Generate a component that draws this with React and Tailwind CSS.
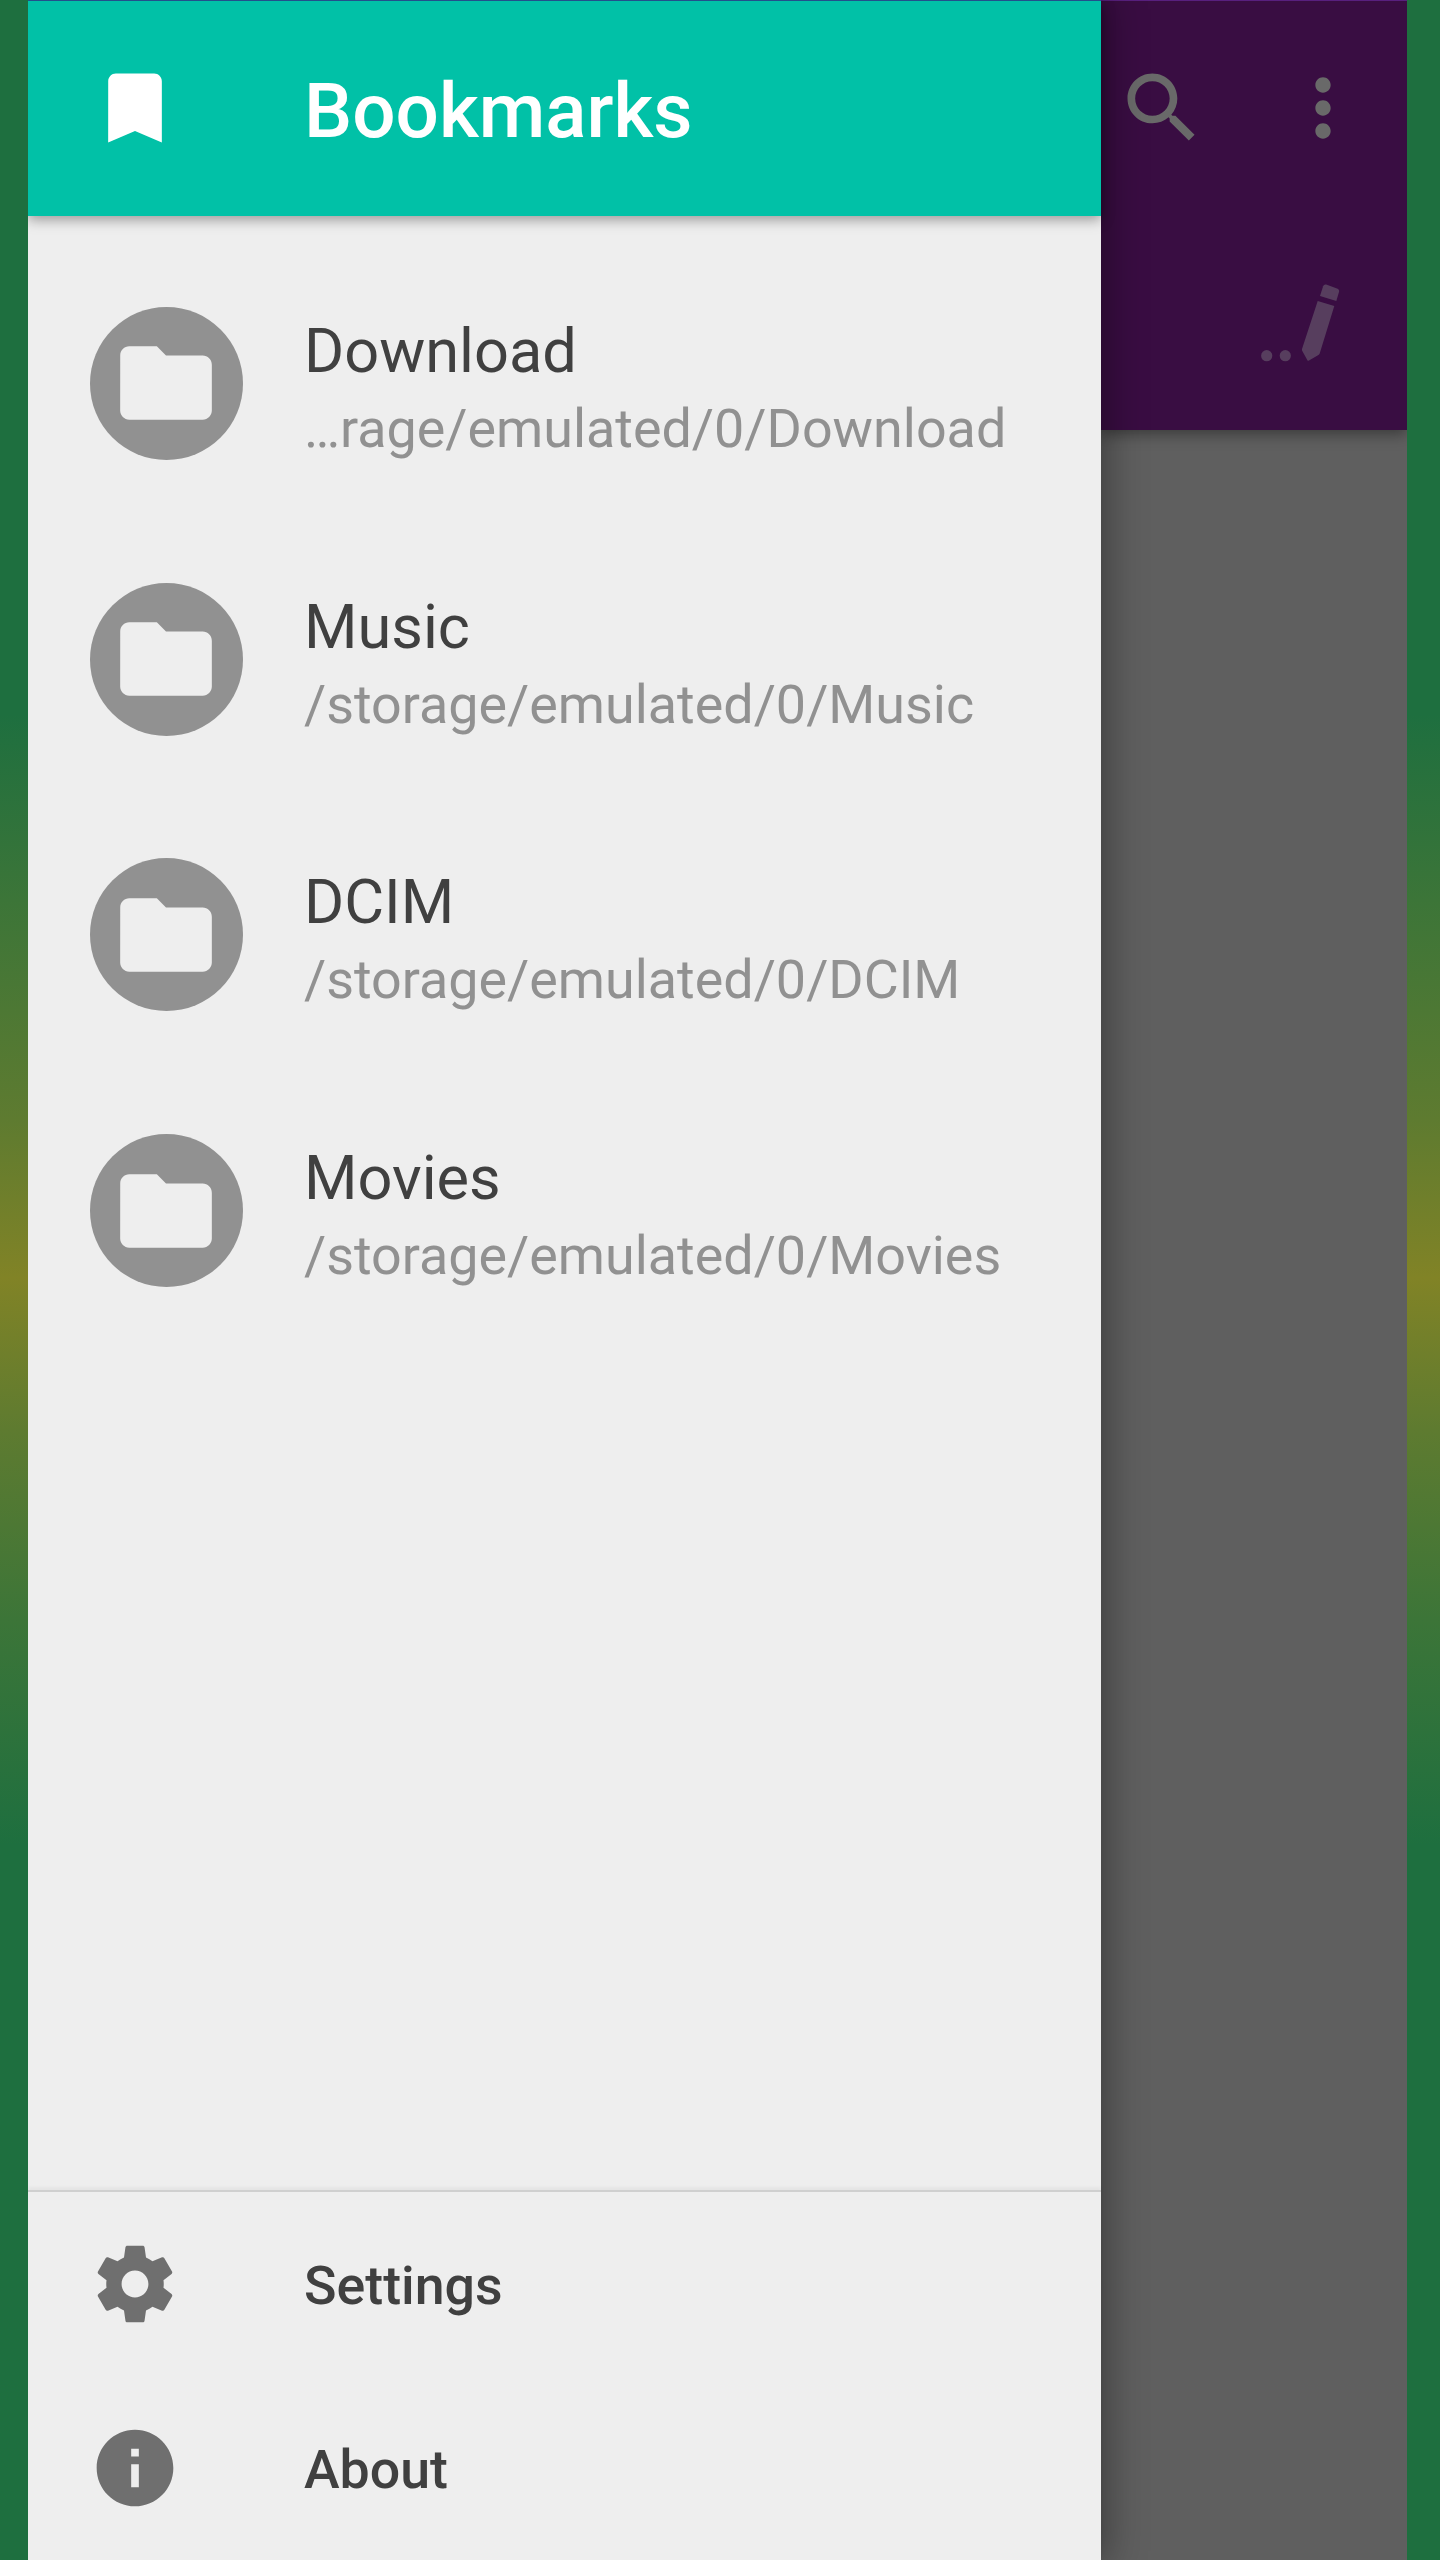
import React from 'react';

const bookmarks = [
    { name: 'Download', path: '…rage/emulated/0/Download' },
    { name: 'Music', path: '/storage/emulated/0/Music' },
    { name: 'DCIM', path: '/storage/emulated/0/DCIM' },
    { name: 'Movies', path: '/storage/emulated/0/Movies' },
];

const icons = {
    bookmark: 'M17 3H7c-1.1 0-1.99.9-1.99 2L5 21l7-3 7 3V5c0-1.1-.9-2-2-2z',
    folder: 'M10 4H4c-1.1 0-1.99.9-1.99 2L2 18c0 1.1.9 2 2 2h16c1.1 0 2-.9 2-2V8c0-1.1-.9-2-2-2h-8l-2-2z',
    settings: 'M19.43 12.98c.04-.32.07-.64.07-.98s-.03-.66-.07-.98l2.11-1.65c.19-.15.24-.42.12-.64l-2-3.46c-.12-.22-.39-.3-.61-.22l-2.49 1c-.52-.4-1.08-.73-1.69-.98l-.38-2.65C14.46 2.18 14.25 2 14 2h-4c-.25 0-.46.18-.49.42l-.38 2.65c-.61.25-1.17.59-1.69.98l-2.49-1c-.23-.09-.49 0-.61.22l-2 3.46c-.13.22-.07.49.12.64l2.11 1.65c-.04.32-.07.65-.07.98s.03.66.07.98l-2.11 1.65c-.19.15-.24.42-.12.64l2 3.46c.12.22.39.3.61.22l2.49-1c.52.4 1.08.73 1.69.98l.38 2.65c.03.24.24.42.49.42h4c.25 0 .46-.18.49-.42l.38-2.65c.61-.25 1.17-.59 1.69-.98l2.49 1c.23.09.49 0 .61-.22l2-3.46c.12-.22.07-.49-.12-.64l-2.11-1.65zM12 15.5c-1.93 0-3.5-1.57-3.5-3.5s1.57-3.5 3.5-3.5 3.5 1.57 3.5 3.5-1.57 3.5-3.5 3.5z',
    info: 'M12 2C6.48 2 2 6.48 2 12s4.48 10 10 10 10-4.48 10-10S17.52 2 12 2zm1 15h-2v-6h2v6zm0-8h-2V7h2v2z',
    search: 'M15.5 14h-.79l-.28-.27C15.41 12.59 16 11.11 16 9.5 16 5.91 13.09 3 9.5 3S3 5.91 3 9.5 5.91 16 9.5 16c1.61 0 3.09-.59 4.23-1.57l.27.28v.79l5 4.99L20.49 19l-4.99-5zm-6 0C7.01 14 5 11.99 5 9.5S7.01 5 9.5 5 14 7.01 14 9.5 11.99 14 9.5 14z',
    more: 'M12 8c1.1 0 2-.9 2-2s-.9-2-2-2-2 .9-2 2 .9 2 2 2zm0 2c-1.1 0-2 .9-2 2s.9 2 2 2 2-.9 2-2-.9-2-2-2zm0 6c-1.1 0-2 .9-2 2s.9 2 2 2 2-.9 2-2-.9-2-2-2z',
};

const Icon = ({ name, className = 'w-[92px] h-[92px]' }) => (
    <svg viewBox="0 0 24 24" fill="currentColor" className={`shrink-0 ${className}`}>
        <path d={icons[name]} />
    </svg>
);

// Two dots followed by a slanted pencil
const RenameIcon = () => (
    <svg viewBox="0 0 80 78" fill="currentColor" className="w-[80px] h-[78px]">
        <circle cx="6.7" cy="71.7" r="5.6" />
        <circle cx="25.3" cy="71.7" r="5.6" />
        <path d="M57.7 17 74.3 22 59.7 69.4Q59.3 70.6 58 71.3L49 76.6Q48 77.3 47.4 76.2L42.3 67Q41.7 66 42 65z" />
        <path d="M60 12 63.1 2.2Q64 0 66.2.6L77 4.5Q79.7 5.5 79 8L76.3 17z" />
    </svg>
);

const BookmarkRow = ({ name, path }) => (
    <li className="flex items-center h-[275.8px] pl-[61.5px]">
        <div className="flex items-center justify-center w-[153px] h-[153px] rounded-full bg-[#919191] text-[#eeeeee]">
            <Icon name="folder" className="w-[110px] h-[110px]" />
        </div>
        <div className="ml-[61.5px] mt-[12px] whitespace-nowrap">
            <div className="text-[61.3px] leading-[78px] text-[#404040]">{name}</div>
            <div className="text-[53.85px] leading-[77px] text-[#919191]">{path}</div>
        </div>
    </li>
);

const FooterRow = ({ icon, label }) => (
    <div className="flex items-center h-[184px] pl-[61px]">
        <Icon name={icon} className="w-[92px] h-[92px] text-[#6f6f6f]" />
        <span className="ml-[123px] pt-[3px] text-[53.7px] leading-[64px] font-medium text-[#404040]">{label}</span>
    </div>
);

const Drawer = () => (
    <aside className="relative z-10 flex flex-col w-[1072.5px] h-full bg-[#eeeeee] shadow-[2px_0_36px_4px_rgba(0,0,0,0.36)] [clip-path:inset(0_-60px_0_0)]">
        <header className="relative flex items-center h-[215.5px] pl-[61px] bg-[#01c1a7] border-t border-[#234f8c] text-white shadow-[0_4px_12px_rgba(0,0,0,0.35)]">
            <Icon name="bookmark" />
            <h1 className="ml-[123px] pt-[5px] text-[76.4px] leading-[90px] font-medium">Bookmarks</h1>
        </header>
        <ul className="flex-1 pt-[30px]">
            {bookmarks.map((item) => (
                <BookmarkRow key={item.name} name={item.name} path={item.path} />
            ))}
        </ul>
        <footer className="h-[370px] border-t-2 border-[#cfcfcf] shadow-[0_-3px_3px_rgba(0,0,0,0.04)]">
            <FooterRow icon="settings" label="Settings" />
            <FooterRow icon="info" label="About" />
        </footer>
    </aside>
);

// Dimmed file list behind the drawer
const Content = () => (
    <main className="flex-1 h-full bg-[#5f5f5f]">
        <div className="h-[430px] bg-[#390d42] border-t border-[#58207e] shadow-[0_4px_14px_rgba(0,0,0,0.4)]">
            <div className="flex items-center justify-between h-[214px] pl-[15px] pr-[38px] text-[#696969]">
                <Icon name="search" />
                <Icon name="more" />
            </div>
            <div className="flex justify-end pt-[69px] pr-[67px] text-[#573e5e]">
                <RenameIcon />
            </div>
        </div>
    </main>
);

export default function App() {
    return (
        <div className="w-[1440px] h-[2560px] overflow-hidden pl-[28px] pr-[33px] bg-[#1e6f3f] bg-[linear-gradient(to_bottom,#1e6f3f_715px,#3c7538_900px,#5e7b30_1120px,#818326_1278px,#5e7b30_1430px,#3c7538_1620px,#1e6f3f_1845px)] font-['Roboto',sans-serif]">
            <div className="flex w-full h-full overflow-hidden">
                <Drawer />
                <Content />
            </div>
        </div>
    );
}
